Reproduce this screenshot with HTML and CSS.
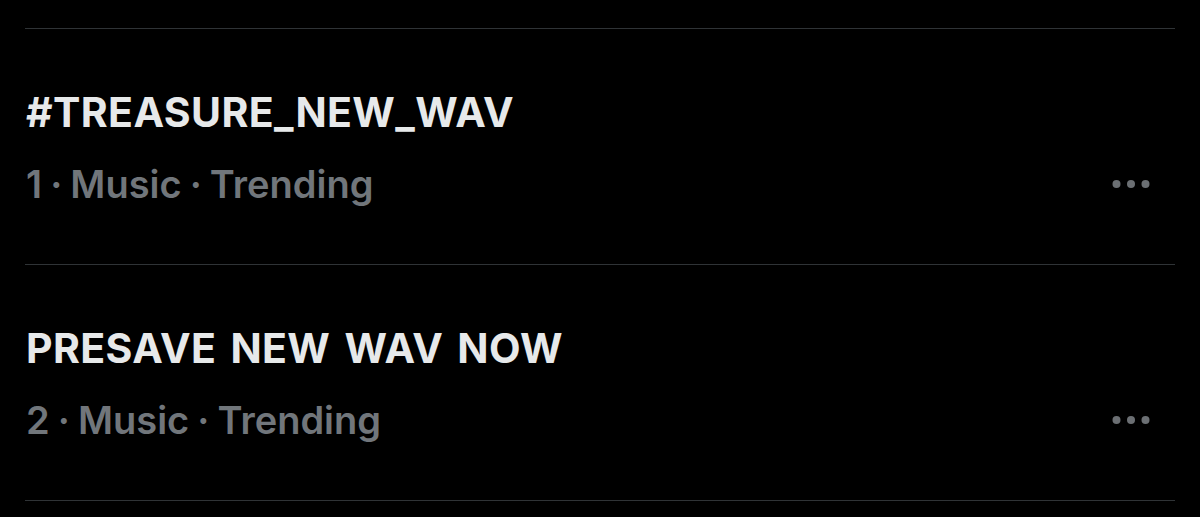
FILE: index.html
```html
<!DOCTYPE html>
<html>
<head>
<meta charset="utf-8">
<link rel="stylesheet" href="styles.css">
</head>
<body>
<div class="list">
  <div class="trend">
    <div class="title">#TREASURE_NEW_WAV</div>
    <div class="meta-row">
      <div class="meta">1 · Music · Trending</div>
      <svg class="more" width="38" height="10" viewBox="0 0 38 10"><circle cx="4.5" cy="5" r="4"/><circle cx="19" cy="5" r="4"/><circle cx="33.5" cy="5" r="4"/></svg>
    </div>
  </div>
  <div class="trend">
    <div class="title">PRESAVE NEW WAV NOW</div>
    <div class="meta-row">
      <div class="meta">2 · Music · Trending</div>
      <svg class="more" width="38" height="10" viewBox="0 0 38 10"><circle cx="4.5" cy="5" r="4"/><circle cx="19" cy="5" r="4"/><circle cx="33.5" cy="5" r="4"/></svg>
    </div>
  </div>
</div>
</body>
</html>
```

FILE: styles.css
```css
html, body {
  margin: 0;
  padding: 0;
  background: #000;
  height: 100%;
  overflow: hidden;
}
body {
  font-family: Inter, "Liberation Sans", sans-serif;
}
.list {
  margin: 28px 25px 0 25px;
  border-top: 1px solid #2f3336;
}
.trend {
  padding: 59px 0 58px 1px;
  border-bottom: 1px solid #2f3336;
  display: flex;
  flex-direction: column;
  gap: 26px;
}
.title {
  font-size: 41px;
  line-height: 48px;
  font-weight: 700;
  color: #e7e9ea;
  letter-spacing: 0.4px;
  word-spacing: 4px;
}
.meta-row {
  display: flex;
  align-items: center;
  justify-content: space-between;
}
.meta {
  font-size: 38px;
  line-height: 44px;
  font-weight: 600;
  color: #71767b;
  word-spacing: -1.5px;
}
.more {
  fill: #6b6f73;
  margin-right: 25px;
}
```
